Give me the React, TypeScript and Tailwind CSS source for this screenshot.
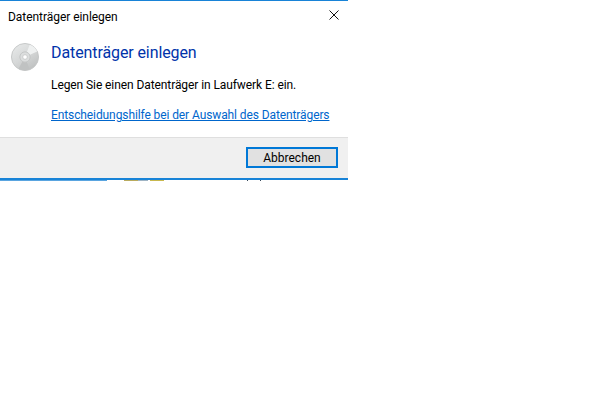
function DiscIcon() {
  return (
    <svg width="28" height="28" viewBox="0 0 30 30" className="shrink-0">
      <defs>
        <linearGradient id="disc" x1="0.1" y1="0" x2="0.8" y2="1">
          <stop offset="0" stopColor="#e8eaea" />
          <stop offset="0.5" stopColor="#d6d8d8" />
          <stop offset="1" stopColor="#bcbebe" />
        </linearGradient>
      </defs>
      <circle cx="15" cy="15" r="14.5" fill="url(#disc)" stroke="#c4c6c6" strokeWidth="1" />
      <path d="M15 15 L8 27.5 A14 14 0 0 0 20 28 Z" fill="#c0c2c2" />
      <path d="M15 15 L20 2 A14 14 0 0 1 28 9 Z" fill="#eff1f1" />
      <circle cx="15" cy="15" r="5.5" fill="#dcdede" stroke="#c2c4c4" strokeWidth="1" />
      <circle cx="15" cy="15" r="2.5" fill="#ffffff" stroke="#c8caca" strokeWidth="1" />
    </svg>
  );
}

export default function App() {
  return (
    <div className="w-[600px] h-[400px] bg-white overflow-hidden text-[12px] text-black font-['Roboto',sans-serif]">
      <div className="w-[348px] flex flex-col">
        <div className="h-px bg-[#1883d7]" />
        <div className="h-[31px] flex items-center justify-between pl-2 pr-[9px]">
          <span className="tracking-[-0.05px]">Datenträger einlegen</span>
          <svg width="10" height="10" viewBox="0 0 10 10" className="mb-[3px]">
            <path d="M0.5 0.5 L9.5 9.5 M9.5 0.5 L0.5 9.5" stroke="#111" strokeWidth="1" fill="none" />
          </svg>
        </div>
        <div className="h-[105px] flex items-start pl-[11px] pt-[11px] gap-[12px]">
          <DiscIcon />
          <div className="flex flex-col whitespace-nowrap">
            <span className="-mt-[1px] text-[16px] leading-[22px] tracking-[-0.1px] text-[#0033aa]">Datenträger einlegen</span>
            <span className="mt-[13px] leading-[16px] tracking-[-0.085px]">Legen Sie einen Datenträger in Laufwerk E: ein.</span>
            <span className="mt-[14px] leading-[16px] tracking-[-0.1px] text-[#0066cc] underline">Entscheidungshilfe bei der Auswahl des Datenträgers</span>
          </div>
        </div>
        <div className="h-[41px] border-t border-[#dfdfdf] bg-[#f0f0f0] flex items-start justify-end pr-[10px] pt-[9px]">
          <button className="w-[92px] h-[21px] border-2 border-[#0078d7] bg-[#e1e1e1] text-[12px] leading-none">
            Abbrechen
          </button>
        </div>
        <div className="h-[2px] bg-[#1883d7]" />
        <div className="h-px flex">
          <div className="w-[107px] h-px bg-[#5aa5e0]" />
          <div className="ml-[17px] w-[14px] h-px bg-[#b9ab5e]" />
          <div className="w-[10px] h-px bg-[#9fb4c4]" />
          <div className="ml-[2px] w-[14px] h-px bg-[#c8b84e]" />
          <div className="ml-[83px] w-[1px] h-px bg-[#3a4a5a]" />
          <div className="ml-[12px] w-[1px] h-px bg-[#3a4a5a]" />
        </div>
      </div>
    </div>
  );
}
